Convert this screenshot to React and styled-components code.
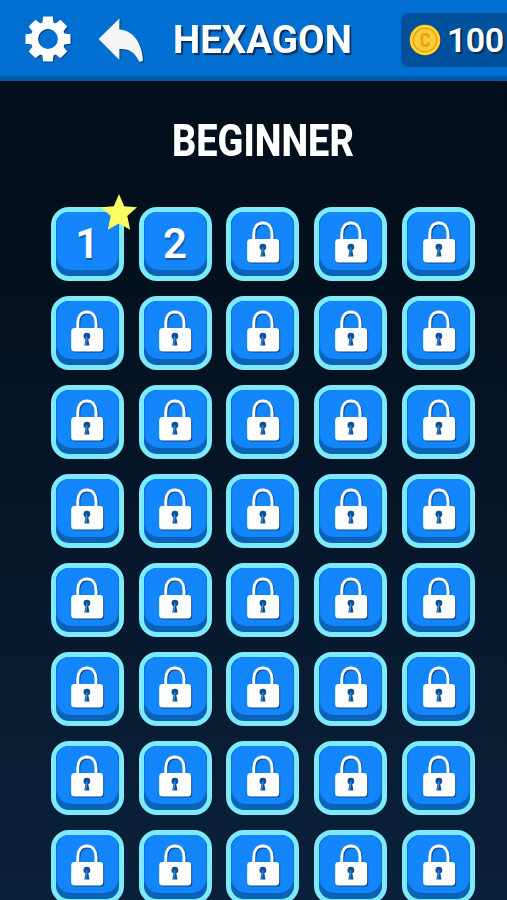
import React from "react";
import styled, { createGlobalStyle } from "styled-components";

const GlobalStyle = createGlobalStyle`
  html, body { margin: 0; padding: 0; overflow: hidden; background: #030e1b; }
  * { box-sizing: border-box; }
`;

const Screen = styled.main`
  width: 507px;
  height: 900px;
  overflow: hidden;
  background: linear-gradient(#030e1b 0, #03101e 260px, #0a213b 900px);
  font-family: Roboto, "Liberation Sans", sans-serif;
  color: #fff;
`;

const Header = styled.header`
  display: flex;
  align-items: flex-start;
  height: 81px;
  background: #006fd2;
  border-bottom: 5px solid #005cab;
  box-shadow: 0 1px 1px #000712;
  overflow: hidden;
`;

const IconButton = styled.button`
  flex: none;
  width: ${(p) => p.$width}px;
  height: 52px;
  margin: 13px 0 0 ${(p) => p.$gap}px;
  padding: 0;
  border: 0;
  background: none;
  svg { display: block; filter: drop-shadow(1.5px 1.5px 0.6px #073a72); }
`;

const Title = styled.h1`
  flex: none;
  width: 198px;
  margin: 17px 0 0 27px;
  font-size: 39.5px;
  line-height: 46px;
  font-weight: 700;
  white-space: nowrap;
  text-shadow: 2px 2px 1px #102f55;
  transform: scaleX(${(p) => p.$stretch});
  transform-origin: left;
`;

const Coins = styled.div`
  flex: none;
  display: flex;
  align-items: center;
  width: 120px;
  height: 54px;
  margin: 13px 0 0 30px;
  padding-left: 8px;
  gap: 5px;
  border-radius: 7px;
  background: #00509c;
  svg { flex: none; }
`;

const Amount = styled.span`
  font-size: 34px;
  line-height: 54px;
  font-weight: 600;
  letter-spacing: -0.6px;
  text-shadow: 2px 2px 1px #0a2c56;
`;

const SectionTitle = styled.h2`
  width: 300px;
  height: 52px;
  margin: 34px 0 0 172px;
  font-size: 44.5px;
  line-height: 52px;
  font-weight: 800;
  transform: scaleX(${(p) => p.$stretch});
  transform-origin: left;
  white-space: nowrap;
`;

const Grid = styled.div`
  display: grid;
  grid-template-columns: repeat(5, 73px);
  grid-auto-rows: 74px;
  column-gap: 14.9px;
  row-gap: 14.95px;
  margin: 40px 0 0 50.7px;
`;

const Tile = styled.button`
  position: relative;
  display: flex;
  align-items: flex-start;
  padding: 0;
  border: 5px solid #7debfd;
  border-radius: 18px;
  background: #0b62b6;
  color: #fff;
  font: inherit;
`;

const Face = styled.span`
  display: flex;
  justify-content: center;
  align-items: center;
  width: 63px;
  height: 58px;
  padding-top: 4px;
  border-radius: 13px 13px 15px 15px;
  background: #1486fc;
  box-shadow: inset 2px 0 1px -1px #0c70dd, inset -2px 0 1px -1px #0c70dd;
  font-size: 42px;
  font-weight: 600;
  text-shadow: 1px 2px 1px #0b58a8;
`;

const StarBadge = styled.svg`
  position: absolute;
  left: 44px;
  top: -19px;
  width: 38px;
  height: 38px;
`;

const Lock = styled.svg`
  display: block;
  width: 38px;
  height: 46px;
  overflow: visible;
  filter: drop-shadow(1.5px 1.5px 0.4px #0c4486);
`;

const teeth = [0, 45, 90, 135, 180, 225, 270, 315];

function GearIcon() {
  return (
    <svg width="48" height="50" viewBox="-24 -25 48 50">
      <g fill="#fff">
        {teeth.map((a) => (
          <path key={a} transform={`rotate(${a})`} d="M-4.8-22.5H4.8L5.8-14H-5.8Z" />
        ))}
      </g>
      <circle r="13.6" fill="none" stroke="#fff" strokeWidth="7.4" />
    </svg>
  );
}

function BackIcon() {
  return (
    <svg width="48" height="50" viewBox="0 0 48 50">
      <path d="M0.6 25 21.4 4.6V15.6C34 16 44.2 28 45 46.8L41.6 48C37 39 32 34.6 21.4 35V46Z" fill="#f5f5f5" />
    </svg>
  );
}

function CoinIcon() {
  return (
    <svg width="33" height="33" viewBox="0 0 33 33">
      <circle cx="17" cy="17" r="15.3" fill="#173e66" />
      <circle cx="16" cy="16" r="15.3" fill="#ffd334" />
      <circle cx="16" cy="16" r="11.7" fill="#f9cd35" stroke="#eaa11e" strokeWidth="1.5" />
      <path d="M19.5 14v-2l-1.5-1.5h-3.5L13 12v8l1.5 1.5H18l1.5-1.5v-2" fill="none" stroke="#eda024" strokeWidth="2.8" />
    </svg>
  );
}

function LockIcon() {
  return (
    <Lock viewBox="0 0 38 46">
      <path d="M9.8 22V14C9.8 7.5 13 3 18.9 3S28 7.5 28 14V22" fill="none" stroke="#fff" strokeWidth="2.9" />
      <rect x="3.2" y="19" width="32" height="23.5" rx="3.4" fill="#fff" />
      <path d="M18.9 23.8a3.4 3.4 0 0 0-3.4 3.4c0 1.5.9 2.5 2 3l-1.2 6.4h5.2l-1.2-6.4c1.2-.5 2-1.5 2-3a3.4 3.4 0 0 0-3.4-3.4Z" fill="#0f4f94" />
      <path d="M17.8 27.2l1.6.3-.2 3.4-.9 5.1h-1.2l1-5.7Z" fill="#3b8ddf" />
    </Lock>
  );
}

function Level({ index }) {
  return (
    <Tile aria-label={`Level ${index + 1}`}>
      <Face>{index < 2 ? index + 1 : <LockIcon />}</Face>
      {index === 0 && (
        <StarBadge viewBox="0 0 38 38">
          <path d="M19 1 24.2 13.3 37 14.2 27.3 23 30.2 36.8 19 30.4 7.8 36.8 10.7 23 1 14.2 13.8 13.3Z" fill="#f9fc62" />
        </StarBadge>
      )}
    </Tile>
  );
}

export default function App() {
  return (
    <Screen>
      <GlobalStyle />
      <Header>
        <IconButton $width={48} $gap={24} aria-label="Settings"><GearIcon /></IconButton>
        <IconButton $width={48} $gap={26} aria-label="Back"><BackIcon /></IconButton>
        <Title $stretch={0.975}>HEXAGON</Title>
        <Coins><CoinIcon /><Amount>100</Amount></Coins>
      </Header>
      <SectionTitle $stretch={0.852}>BEGINNER</SectionTitle>
      <Grid>
        {Array.from({ length: 40 }, (_, i) => <Level key={i} index={i} />)}
      </Grid>
    </Screen>
  );
}
